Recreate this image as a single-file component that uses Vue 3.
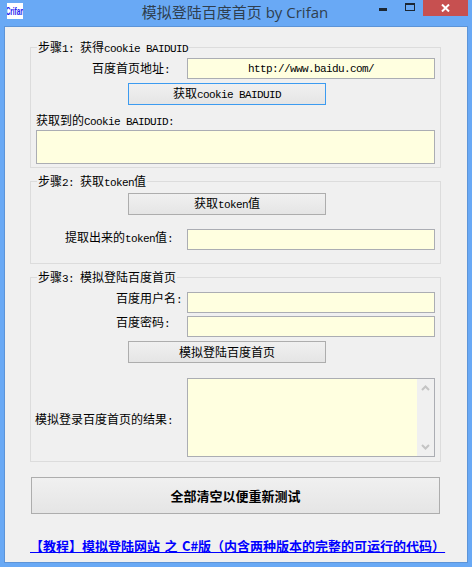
<template>
  <div class="window">
    <!-- 标题栏 -->
    <div class="titlebar">
      <div class="app-icon"><span>Crifan</span></div>
      <div class="title">模拟登陆百度首页 by Crifan</div>
      <div class="controls">
        <svg class="ctl-min" width="8" height="3" viewBox="0 0 8 3"><rect width="8" height="3" fill="#1c2733" /></svg>
        <svg class="ctl-max" width="10" height="8" viewBox="0 0 10 8"><path d="M0 0h10v8H0z M1 2v5h8V2z" fill="#1c2733" fill-rule="evenodd" /></svg>
        <div class="ctl-close">
          <svg width="9" height="8" viewBox="0 0 9 8"><path d="M1 0.5 L8 7.5 M8 0.5 L1 7.5" stroke="#fff" stroke-width="2" fill="none" /></svg>
        </div>
      </div>
    </div>

    <div class="client">
      <!-- 步骤1 -->
      <section class="group group-one">
        <div class="legend">步骤<span class="mono">1: </span>获得<span class="mono">cookie BAIDUID</span></div>
        <div class="row">
          <label class="label label-home">百度首页地址<span class="mono">:</span></label>
          <input class="field url" readonly value="http://www.baidu.com/" />
        </div>
        <button class="btn btn-focus">获取<span class="mono">cookie BAIDUID</span></button>
        <div class="cookie-label">获取到的<span class="mono">Cookie BAIDUID:</span></div>
        <textarea class="field cookie-box" readonly></textarea>
      </section>

      <!-- 步骤2 -->
      <section class="group group-two">
        <div class="legend">步骤<span class="mono">2: </span>获取<span class="mono">token</span>值</div>
        <button class="btn">获取<span class="mono">token</span>值</button>
        <div class="row row-token">
          <label class="label label-token">提取出来的<span class="mono">token</span>值<span class="mono">:</span></label>
          <input class="field" readonly />
        </div>
      </section>

      <!-- 步骤3 -->
      <section class="group group-three">
        <div class="legend">步骤<span class="mono">3: </span>模拟登陆百度首页</div>
        <div class="row">
          <label class="label label-user">百度用户名<span class="mono">:</span></label>
          <input class="field" readonly />
        </div>
        <div class="row row-pass">
          <label class="label label-pass">百度密码<span class="mono">:</span></label>
          <input class="field" readonly />
        </div>
        <button class="btn">模拟登陆百度首页</button>
        <div class="row row-result">
          <label class="label label-result">模拟登录百度首页的结果<span class="mono">:</span></label>
          <div class="field result-box">
            <div class="scrollbar">
              <svg width="9" height="6" viewBox="0 0 9 6"><path d="M1 5 L4.5 1.5 L8 5" stroke="#c4c4c4" stroke-width="2" fill="none" /></svg>
              <svg width="9" height="6" viewBox="0 0 9 6"><path d="M1 1 L4.5 4.5 L8 1" stroke="#c4c4c4" stroke-width="2" fill="none" /></svg>
            </div>
          </div>
        </div>
      </section>

      <button class="btn btn-clear">全部清空以便重新测试</button>
      <a class="tutorial" href="#">【教程】模拟登陆网站 之 C#版（内含两种版本的完整的可运行的代码）</a>
    </div>
  </div>
</template>

<script setup>
</script>

<style>
html, body {
  margin: 0;
  background: #69a9f5;
}
</style>

<style scoped>
.window {
  width: 472px;
  height: 567px;
  background: #69a9f5;
  display: flex;
  flex-direction: column;
  overflow: hidden;
  font-family: "Noto Sans CJK SC", "Liberation Sans", sans-serif;
  font-size: 12px;
  line-height: 12px;
  color: #000;
}

.titlebar {
  height: 27px;
  flex: none;
  display: flex;
  position: relative;
}

.app-icon {
  width: 16px;
  height: 16px;
  margin: 3px 0 0 7px;
  background: #fff;
  color: #2020f0;
  overflow: hidden;
  display: flex;
  align-items: center;
  justify-content: center;
}

.app-icon span {
  font-family: "Liberation Sans", sans-serif;
  font-size: 11px;
  font-weight: 700;
  line-height: 16px;
  transform: scaleX(0.58);
}

.title {
  flex: 1;
  margin-left: -25px;
  text-align: center;
  font-family: "Open Sans", "Noto Sans CJK SC", sans-serif;
  font-size: 15px;
  line-height: 24px;
  color: #2f3f4f;
}

/* 窗口按钮盖在标题栏右上角 */
.controls {
  position: absolute;
  top: 0;
  right: 4px;
  display: flex;
  align-items: flex-start;
}

.ctl-min {
  margin: 8px 18px 0 0;
}

.ctl-max {
  margin: 3px 8px 0 0;
}

.ctl-close {
  width: 45px;
  height: 16px;
  background: #c75050;
  display: flex;
  align-items: center;
  justify-content: center;
}

.client {
  width: 462px;
  height: 535px;
  margin-left: 5px;
  box-sizing: border-box;
  background: #f0f0f0;
  box-shadow: 0 0 0 1px #5c94d8;
  padding: 20px 26px 0 25px;
  display: flex;
  flex-direction: column;
}

.group {
  position: relative;
  box-sizing: border-box;
  border: 1px solid #dcdcdc;
  padding: 0 5px 0 5px;
  display: flex;
  flex-direction: column;
}

.group-one {
  height: 121px;
  padding-top: 10px;
}

.group-two {
  height: 83px;
  margin-top: 13px;
  padding-top: 11px;
}

.group-three {
  height: 185px;
  margin-top: 13px;
  padding-top: 14px;
}

.legend {
  position: absolute;
  top: -7px;
  left: 6px;
  padding: 0 1px;
  background: #f0f0f0;
  white-space: pre;
}

.mono {
  font-family: "Liberation Mono", monospace;
  font-size: 11px;
  letter-spacing: -0.6px;
}

.row {
  display: flex;
  justify-content: flex-end;
  align-items: center;
}

.label {
  white-space: nowrap;
  margin-right: 14px;
}

.label-home {
  margin-right: 17px;
}

.label-token {
  margin-bottom: 3px;
}

.label-user {
  margin-right: 5px;
  margin-bottom: 7px;
}

.label-pass {
  margin-right: 17px;
  margin-bottom: 7px;
}

.label-result {
  margin-top: 5px;
}

.field {
  width: 248px;
  height: 21px;
  flex: none;
  box-sizing: border-box;
  margin: 0;
  padding: 0;
  border: 1px solid #abadb3;
  border-radius: 0;
  background: #ffffe0;
  outline: none;
  resize: none;
  display: block;
}

.url {
  font-family: "Liberation Mono", monospace;
  font-size: 11px;
  letter-spacing: -0.6px;
  text-align: center;
  color: #000;
}

.btn {
  width: 198px;
  height: 22px;
  flex: none;
  box-sizing: border-box;
  margin: 4px 0 0 92px;
  padding: 0;
  border: 1px solid #adadad;
  background: linear-gradient(#f0f0f0, #e5e5e5);
  font-family: inherit;
  font-size: 12px;
  line-height: 12px;
  color: #000;
}

.btn-focus {
  border-color: #3c9bf0;
}

.group-two .btn {
  margin-top: 0;
}

.cookie-label {
  margin-top: 9px;
  height: 13px;
  white-space: nowrap;
}

.cookie-box {
  width: 399px;
  height: 34px;
  margin-top: 3px;
}

.row-token {
  margin-top: 14px;
}

.row-pass {
  margin-top: 3px;
}

.row-result {
  margin-top: 15px;
}

.result-box {
  height: 79px;
  display: flex;
  justify-content: flex-end;
}

.scrollbar {
  width: 17px;
  background: #f0f0f0;
  display: flex;
  flex-direction: column;
  justify-content: space-between;
  align-items: center;
  padding: 6px 0;
  box-sizing: border-box;
}

.btn-clear {
  width: 409px;
  height: 37px;
  margin: 15px 0 0 1px;
  font-size: 13px;
  font-weight: 700;
}

.tutorial {
  margin-top: 25px;
  white-space: nowrap;
  font-size: 13px;
  font-weight: 700;
  line-height: 14px;
  word-spacing: 1.5px;
  color: #0000ff;
  text-decoration: underline;
}
</style>
